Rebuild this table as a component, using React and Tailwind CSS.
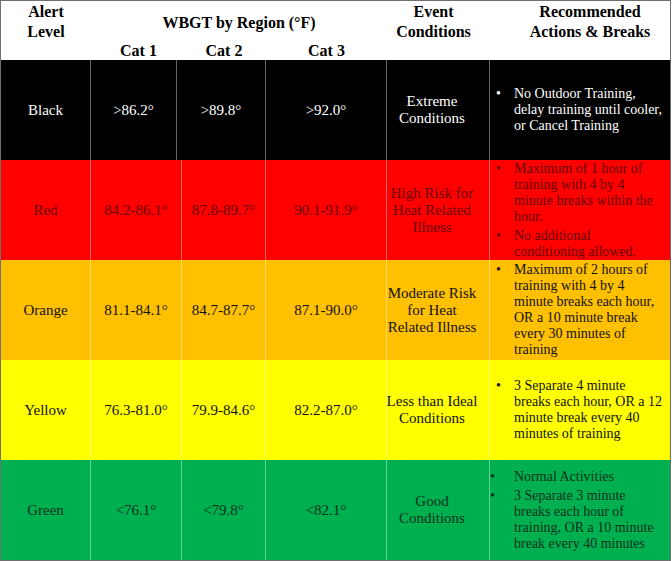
const rows = [
  {
    level: 'Black',
    bg: 'bg-black',
    ink: 'text-white',
    grid: 'grid-cols-[90px_86px_89px_121px_103px_1fr]',
    temps: ['>86.2°', '>89.8°', '>92.0°'],
    cond: ['Extreme', 'Conditions'],
    items: [['No Outdoor Training,', 'delay training until cooler,', 'or Cancel Training']],
    dot: 'pl-[6px]',
  },
  {
    level: 'Red',
    bg: 'bg-[#ff0000]',
    ink: 'text-[#660000]',
    grid: 'grid-cols-[90px_91px_84px_121px_103px_1fr]',
    temps: ['84.2-86.1°', '87.8-89.7°', '90.1-91.9°'],
    cond: ['High Risk for', 'Heat Related', 'Illness'],
    items: [
      ['Maximum of 1 hour of', 'training with 4 by 4', 'minute breaks within the', 'hour.'],
      ['No additional', 'conditioning allowed.'],
    ],
    dot: 'pl-[6px]',
  },
  {
    level: 'Orange',
    bg: 'bg-[#ffc000]',
    ink: 'text-[#111]',
    grid: 'grid-cols-[90px_91px_84px_121px_103px_1fr]',
    temps: ['81.1-84.1°', '84.7-87.7°', '87.1-90.0°'],
    cond: ['Moderate Risk', 'for Heat', 'Related Illness'],
    items: [['Maximum of 2 hours of', 'training with 4 by 4', 'minute breaks each hour,', 'OR a 10 minute break', 'every 30 minutes of', 'training']],
    dot: 'pl-[6px]',
  },
  {
    level: 'Yellow',
    bg: 'bg-[#ffff00]',
    ink: 'text-[#111]',
    grid: 'grid-cols-[90px_91px_84px_121px_103px_1fr]',
    temps: ['76.3-81.0°', '79.9-84.6°', '82.2-87.0°'],
    cond: ['Less than Ideal', 'Conditions'],
    items: [['3 Separate 4 minute', 'breaks each hour, OR a 12', 'minute break every 40', 'minutes of training']],
    dot: 'pl-[6px]',
  },
  {
    level: 'Green',
    bg: 'bg-[#00b050]',
    ink: 'text-[#07301a]',
    grid: 'grid-cols-[90px_91px_84px_121px_103px_1fr]',
    temps: ['<76.1°', '<79.8°', '<82.1°'],
    cond: ['Good', 'Conditions'],
    items: [
      ['Normal Activities'],
      ['3 Separate 3 minute', 'breaks each hour of', 'training, OR a 10 minute', 'break every 40 minutes'],
    ],
    dot: 'pl-0',
  },
]

const cell = 'flex items-center justify-center text-center border-r border-white/40'

export default function App() {
  return (
    <div className="w-[671px] h-[561px] border border-[#707070] bg-white font-['Liberation_Serif',serif] flex flex-col">
      {/* header */}
      <div className="h-[59px] grid grid-cols-[90px_91px_84px_121px_103px_1fr] grid-rows-[39px_20px] text-[16px] font-bold leading-[20px] text-black">
        <div className="row-span-2 flex flex-col items-center pt-[1px]">
          <span>Alert</span>
          <span>Level</span>
        </div>
        <div className="col-span-3 flex items-center justify-center pt-[4px]">WBGT by Region (°F)</div>
        <div className="row-span-2 flex flex-col items-center pt-[1px] pr-[10px]">
          <span>Event</span>
          <span>Conditions</span>
        </div>
        <div className="row-span-2 flex flex-col items-center pt-[1px] pl-[20px]">
          <span>Recommended</span>
          <span>Actions &amp; Breaks</span>
        </div>
        <div className="flex items-center justify-center pl-[4px] pt-[2px]">Cat 1</div>
        <div className="flex items-center justify-center pt-[2px]">Cat 2</div>
        <div className="flex items-center justify-center pt-[2px]">Cat 3</div>
      </div>

      {rows.map((r) => (
        <div key={r.level} className={`h-[100px] grid ${r.grid} ${r.bg} ${r.ink} text-[15px] leading-[17px]`}>
          <div className={cell}>{r.level}</div>
          {r.temps.map((t) => (
            <div key={t} className={cell}>{t}</div>
          ))}
          <div className={`${cell} flex-col pr-[12px]`}>
            {r.cond.map((c) => (
              <span key={c} className="whitespace-nowrap">{c}</span>
            ))}
          </div>
          <div className="flex flex-col justify-center gap-[3px] text-[14px] leading-[16px]">
            {r.items.map((lines, i) => (
              <div key={i} className="flex">
                <span className={`w-[24px] shrink-0 ${r.dot}`}>•</span>
                <div className="flex flex-col">
                  {lines.map((l) => (
                    <span key={l} className="whitespace-nowrap">{l}</span>
                  ))}
                </div>
              </div>
            ))}
          </div>
        </div>
      ))}
    </div>
  )
}
